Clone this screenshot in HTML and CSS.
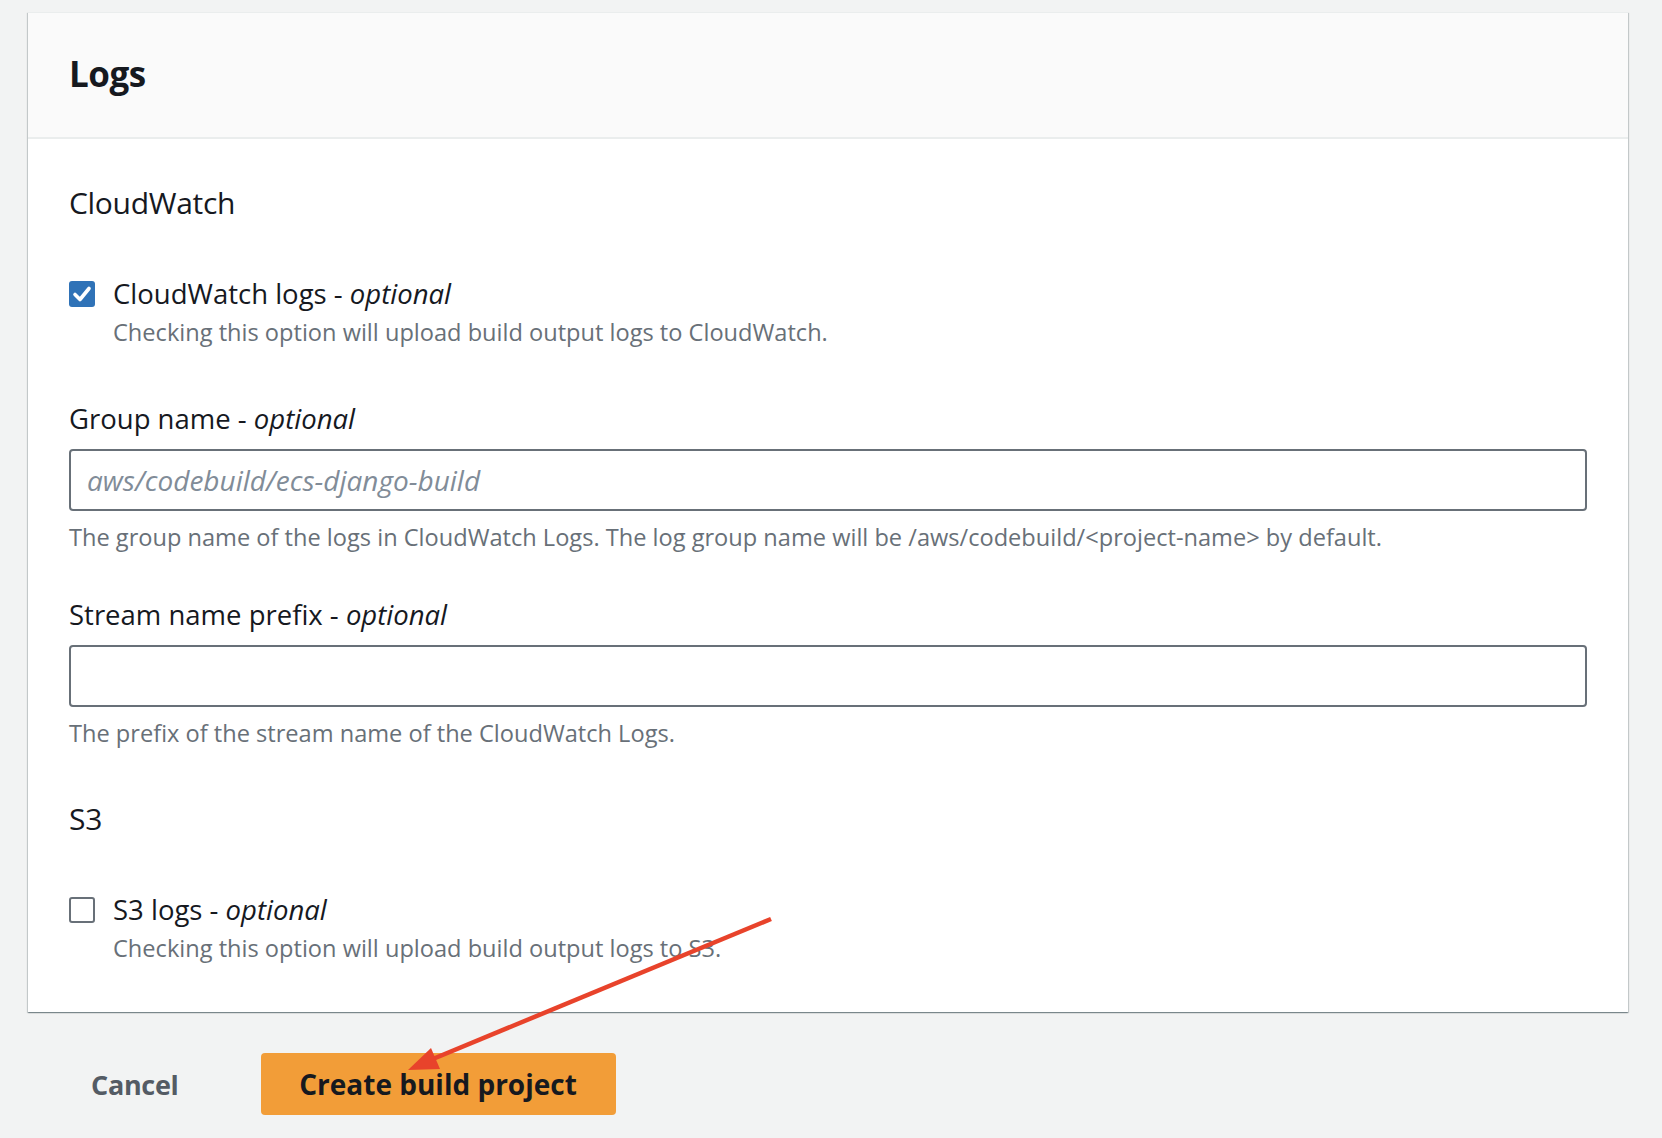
FILE: index.html
```html
<!DOCTYPE html>
<html lang="en">
<head>
<meta charset="utf-8">
<title>Logs</title>
<link rel="stylesheet" href="styles.css">
</head>
<body>
<div class="page">
  <section class="card">
    <header class="card-header">
      <h2 class="card-title">Logs</h2>
    </header>
    <div class="card-body">
      <h3 class="section-title">CloudWatch</h3>
      <label class="check-field first-check">
        <span class="box checked">
          <svg viewBox="0 0 26 26" width="26" height="26"><path d="M6 13.5 L11 18.5 L20 7.5" fill="none" stroke="#fff" stroke-width="3.6" stroke-linecap="round" stroke-linejoin="round"/></svg>
        </span>
        <span class="check-text">
          <span class="label">CloudWatch logs - <i>optional</i></span>
          <span class="desc">Checking this option will upload build output logs to CloudWatch.</span>
        </span>
      </label>

      <div class="field field-group">
        <div class="label">Group name - <i>optional</i></div>
        <input class="text-input" type="text" placeholder="aws/codebuild/ecs-django-build">
        <div class="desc">The group name of the logs in CloudWatch Logs. The log group name will be /aws/codebuild/&lt;project-name&gt; by default.</div>
      </div>

      <div class="field field-stream">
        <div class="label">Stream name prefix - <i>optional</i></div>
        <input class="text-input" type="text">
        <div class="desc">The prefix of the stream name of the CloudWatch Logs.</div>
      </div>

      <h3 class="section-title s3-title">S3</h3>
      <label class="check-field">
        <span class="box"></span>
        <span class="check-text">
          <span class="label">S3 logs - <i>optional</i></span>
          <span class="desc">Checking this option will upload build output logs to S3.</span>
        </span>
      </label>
    </div>
  </section>

  <div class="actions">
    <button class="btn-link" type="button">Cancel</button>
    <button class="btn-primary" type="button">Create build project</button>
  </div>
</div>

<svg class="annotation" width="1662" height="1138" viewBox="0 0 1662 1138">
  <line x1="771" y1="919" x2="428" y2="1061" stroke="#e8432b" stroke-width="4.5"/>
  <polygon points="408,1070 431,1048 440,1069" fill="#e8432b"/>
</svg>
</body>
</html>
```

FILE: styles.css
```css
* { box-sizing: border-box; }

html, body {
  margin: 0;
  padding: 0;
}

body {
  background: #f2f3f3;
  font-family: "Open Sans", "Noto Sans", "Liberation Sans", sans-serif;
  color: #16191f;
  width: 1662px;
  height: 1138px;
  overflow: hidden;
}

.page {
  padding: 12px 34px 0 28px;
}

.card {
  background: #fff;
  box-shadow: 0 1px 1px 0 rgba(0, 28, 36, 0.3), 1px 1px 1px 0 rgba(0, 28, 36, 0.15), -1px 1px 1px 0 rgba(0, 28, 36, 0.15);
  border-top: 1px solid #eaeded;
}

.card-header {
  background: #fafafa;
  border-bottom: 2px solid #eaeded;
  padding: 39px 41px 41px;
}

.card-title {
  margin: 0;
  font-size: 35px;
  line-height: 44px;
  font-weight: 700;
  letter-spacing: -0.5px;
}

.card-body {
  padding: 44px 41px 46px;
}

.section-title {
  margin: 0;
  font-size: 30px;
  line-height: 40px;
  font-weight: 400;
  letter-spacing: -0.3px;
}

.s3-title {
  margin-top: 48px;
}

.check-field {
  display: flex;
  align-items: flex-start;
  margin-top: 51px;
}

.box {
  flex: none;
  width: 26px;
  height: 26px;
  margin-top: 7px;
  margin-right: 18px;
  border: 2px solid #687078;
  border-radius: 3px;
  background: #fff;
}

.box.checked {
  border: none;
  background: #2f72b7;
}

.box svg { display: block; }

.check-text {
  display: flex;
  flex-direction: column;
}

.label {
  display: block;
  font-size: 27.5px;
  line-height: 40px;
}

.label i {
  font-style: italic;
}

.desc {
  display: block;
  font-size: 23.6px;
  line-height: 36px;
  color: #687078;
}

.field-group { margin-top: 49px; }
.field-stream { margin-top: 40px; }

.text-input {
  display: block;
  width: 100%;
  height: 62px;
  margin: 10px 0 8px;
  padding: 0 16px;
  border: 2px solid #687078;
  border-radius: 4px;
  background: #fff;
  font-family: inherit;
  font-size: 28px;
  color: #16191f;
  outline: none;
}

.text-input::placeholder {
  color: #818c98;
  font-style: italic;
}

.actions {
  display: flex;
  align-items: center;
  margin-top: 41px;
  padding-left: 63px;
}

.btn-link {
  border: none;
  background: transparent;
  padding: 0;
  margin-right: 82px;
  font-family: inherit;
  font-size: 27px;
  font-weight: 700;
  color: #545b64;
  letter-spacing: -0.3px;
}

.btn-primary {
  width: 355px;
  height: 62px;
  border: none;
  border-radius: 4px;
  background: #f29d38;
  font-family: inherit;
  font-size: 28px;
  font-weight: 700;
  color: #16191f;
}

.annotation {
  position: absolute;
  left: 0;
  top: 0;
  pointer-events: none;
}
```
